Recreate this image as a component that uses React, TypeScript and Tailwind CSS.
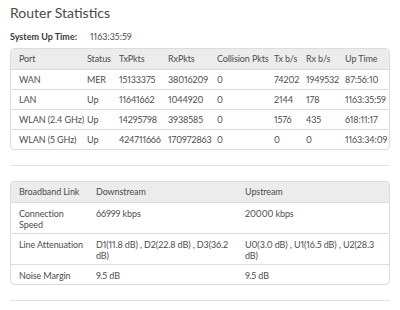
const ports = [
  ["WAN", "MER", "15133375", "38016209", "0", "74202", "1949532", "87:56:10"],
  ["LAN", "Up", "11641662", "1044920", "0", "2144", "178", "1163:35:59"],
  ["WLAN (2.4 GHz)", "Up", "14295798", "3938585", "0", "1576", "435", "618:11:17"],
  ["WLAN (5 GHz)", "Up", "424711666", "170972863", "0", "0", "0", "1163:34:09"],
];

const portCols = [
  { label: "Port", w: "w-[68px]" },
  { label: "Status", w: "w-[32px]" },
  { label: "TxPkts", w: "w-[49px]" },
  { label: "RxPkts", w: "w-[49px]" },
  { label: "Collision Pkts", w: "w-[57px]" },
  { label: "Tx b/s", w: "w-[32px]" },
  { label: "Rx b/s", w: "w-[39px]" },
  { label: "Up Time", w: "w-[55px]" },
];

const links = [
  ["Connection Speed", "66999 kbps", "20000 kbps"],
  ["Line Attenuation", "D1(11.8 dB) , D2(22.8 dB) , D3(36.2 dB)", "U0(3.0 dB) , U1(16.5 dB) , U2(28.3 dB)"],
  ["Noise Margin", "9.5 dB", "9.5 dB"],
];

export default function App() {
  return (
    <div className="w-[400px] h-[310px] overflow-hidden bg-white px-[10px] pt-[3px] text-[#4d4d4d] font-['Lato',sans-serif] proportional-nums">
      <h1 className="text-[14px] leading-[20px] text-[#4a4a4a]">Router Statistics</h1>

      <div className="flex mt-[7px] text-[9px] leading-[14px]">
        <span className="w-[80px] font-bold text-[#3a3a3a]">System Up Time:</span>
        <span>1163:35:59</span>
      </div>

      {/* Port table */}
      <div className="mt-[4px] border border-[#dcdcdc] rounded-[4px] overflow-hidden">
        <table className="w-full table-fixed border-collapse text-[9px] leading-[11px] tracking-[-0.1px]">
          <thead>
            <tr className="bg-[#ececec]">
              {portCols.map((c) => (
                <th key={c.label} className={`${c.w} font-normal text-left pl-[8px] pr-0 h-[20px] whitespace-nowrap`}>
                  {c.label}
                </th>
              ))}
            </tr>
          </thead>
          <tbody>
            {ports.map((r) => (
              <tr key={r[0]} className="border-t border-[#dcdcdc]">
                {r.map((v, i) => (
                  <td key={i} className="pl-[8px] h-[20px] whitespace-nowrap">
                    {v}
                  </td>
                ))}
              </tr>
            ))}
          </tbody>
        </table>
      </div>

      <div className="mt-[15px] border-t border-[#e3e3e3]" />

      {/* Broadband table */}
      <div className="mt-[15px] border border-[#dcdcdc] rounded-[4px] overflow-hidden">
        <table className="w-full table-fixed border-collapse text-[9px] leading-[11px] tracking-[-0.1px]">
          <thead>
            <tr className="bg-[#ececec]">
              <th className="w-[77px] font-normal text-left pl-[8px] h-[20px]">Broadband Link</th>
              <th className="w-[149px] font-normal text-left pl-[8px]">Downstream</th>
              <th className="font-normal text-left pl-[8px]">Upstream</th>
            </tr>
          </thead>
          <tbody>
            {links.map((r) => (
              <tr key={r[0]} className="border-t border-[#dcdcdc] align-top">
                {r.map((v, i) => (
                  <td key={i} className="pl-[8px] pr-[2px] pt-[5px] pb-[3px]">
                    {v}
                  </td>
                ))}
              </tr>
            ))}
          </tbody>
        </table>
      </div>

      <div className="mt-[15px] border-t border-[#e3e3e3]" />
    </div>
  );
}
